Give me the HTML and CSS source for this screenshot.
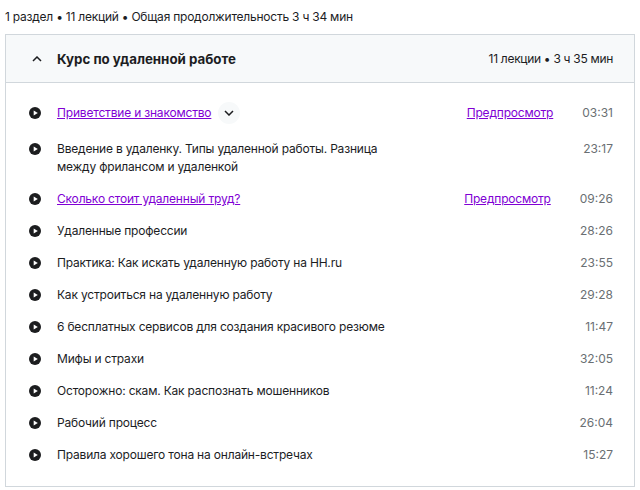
FILE: index.html
```html
<!DOCTYPE html>
<html lang="ru">
<head>
<meta charset="utf-8">
<title>Курс</title>
<link rel="stylesheet" href="styles.css">
</head>
<body>
<svg class="defs" width="0" height="0" aria-hidden="true">
  <symbol id="play" viewBox="0 0 12 12"><circle cx="6" cy="6" r="6" fill="#1c1d1f"/><path d="M4.7 3.5v5L8.8 6z" fill="#fff"/></symbol>
</svg>
<p class="summary">1 раздел • 11 лекций • Общая продолжительность 3 ч 34 мин</p>
<section class="course">
  <header class="head">
    <svg class="chev" width="10" height="6" viewBox="0 0 10 6"><path d="M1 5l4-4 4 4" fill="none" stroke="#1c1d1f" stroke-width="1.5"/></svg>
    <h2 class="head-title">Курс по удаленной работе</h2>
    <span class="head-meta">11 лекции • 3 ч 35 мин</span>
  </header>
  <ul class="list">
    <li class="row row-first"><svg class="play"><use href="#play"/></svg><span class="title"><a class="link" href="#">Приветствие и знакомство</a><span class="more"><svg width="10" height="6" viewBox="0 0 10 6"><path d="M1 1l4 4 4-4" fill="none" stroke="#1c1d1f" stroke-width="1.5"/></svg></span></span><a class="link preview" href="#">Предпросмотр</a><span class="time">03:31</span></li>
    <li class="row"><svg class="play"><use href="#play"/></svg><span class="title title-wrap">Введение в удаленку. Типы удаленной работы. Разница между фрилансом и удаленкой</span><span class="time">23:17</span></li>
    <li class="row"><svg class="play"><use href="#play"/></svg><span class="title"><a class="link" href="#">Сколько стоит удаленный труд?</a></span><a class="link preview" href="#">Предпросмотр</a><span class="time">09:26</span></li>
    <li class="row"><svg class="play"><use href="#play"/></svg><span class="title">Удаленные профессии</span><span class="time">28:26</span></li>
    <li class="row"><svg class="play"><use href="#play"/></svg><span class="title">Практика: Как искать удаленную работу на HH.ru</span><span class="time">23:55</span></li>
    <li class="row"><svg class="play"><use href="#play"/></svg><span class="title">Как устроиться на удаленную работу</span><span class="time">29:28</span></li>
    <li class="row"><svg class="play"><use href="#play"/></svg><span class="title">6 бесплатных сервисов для создания красивого резюме</span><span class="time">11:47</span></li>
    <li class="row"><svg class="play"><use href="#play"/></svg><span class="title">Мифы и страхи</span><span class="time">32:05</span></li>
    <li class="row"><svg class="play"><use href="#play"/></svg><span class="title">Осторожно: скам. Как распознать мошенников</span><span class="time">11:24</span></li>
    <li class="row"><svg class="play"><use href="#play"/></svg><span class="title">Рабочий процесс</span><span class="time">26:04</span></li>
    <li class="row"><svg class="play"><use href="#play"/></svg><span class="title">Правила хорошего тона на онлайн-встречах</span><span class="time">15:27</span></li>
  </ul>
</section>
</body>
</html>
```
FILE: styles.css
```css
* { box-sizing: border-box; }
html, body { margin: 0; padding: 0; }
body {
  width: 640px;
  height: 490px;
  overflow: hidden;
  background: #fff;
  color: #1c1d1f;
  font-family: Inter, sans-serif;
  font-size: 12px;
  letter-spacing: -0.19px;
  line-height: 18px;
  padding: 8px 5px 0 5px;
}
.defs { position: absolute; }
.summary { margin: 0 0 8px; height: 18px; letter-spacing: -0.23px; }
.course { border: 1px solid #d1d7dc; height: 453px; }
.head {
  display: flex;
  align-items: center;
  height: 48px;
  padding: 0 21px 0 26px;
  background: #f7f9fa;
  border-bottom: 1px solid #d1d7dc;
}
.chev { margin-right: 15px; }
.head-title { margin: 0; flex: 1; font-size: 13.3px; font-weight: 700; letter-spacing: 0; }
.head-meta { letter-spacing: -0.3px; }
.list { list-style: none; margin: 0; padding: 10px 21px 0 23px; }
.row { display: flex; align-items: flex-start; padding: 7px 0; }
.row-first { align-items: center; height: 40px; }
.play { width: 12px; height: 12px; flex: none; margin: 3px 16px 0 0; }
.row-first .play { margin-top: 0; }
.title { flex: 1; display: flex; align-items: center; }
.title-wrap { display: block; flex: none; width: 330px; margin-right: auto; }
.link { color: #8000d4; text-decoration: underline; }
.more {
  display: flex;
  align-items: center;
  justify-content: center;
  width: 22px;
  height: 22px;
  margin-left: 7px;
  border-radius: 50%;
  background: #f7f9fa;
}
.preview { margin-right: 29px; }
.time { color: #6a6f73; flex: none; letter-spacing: 0; }
```
